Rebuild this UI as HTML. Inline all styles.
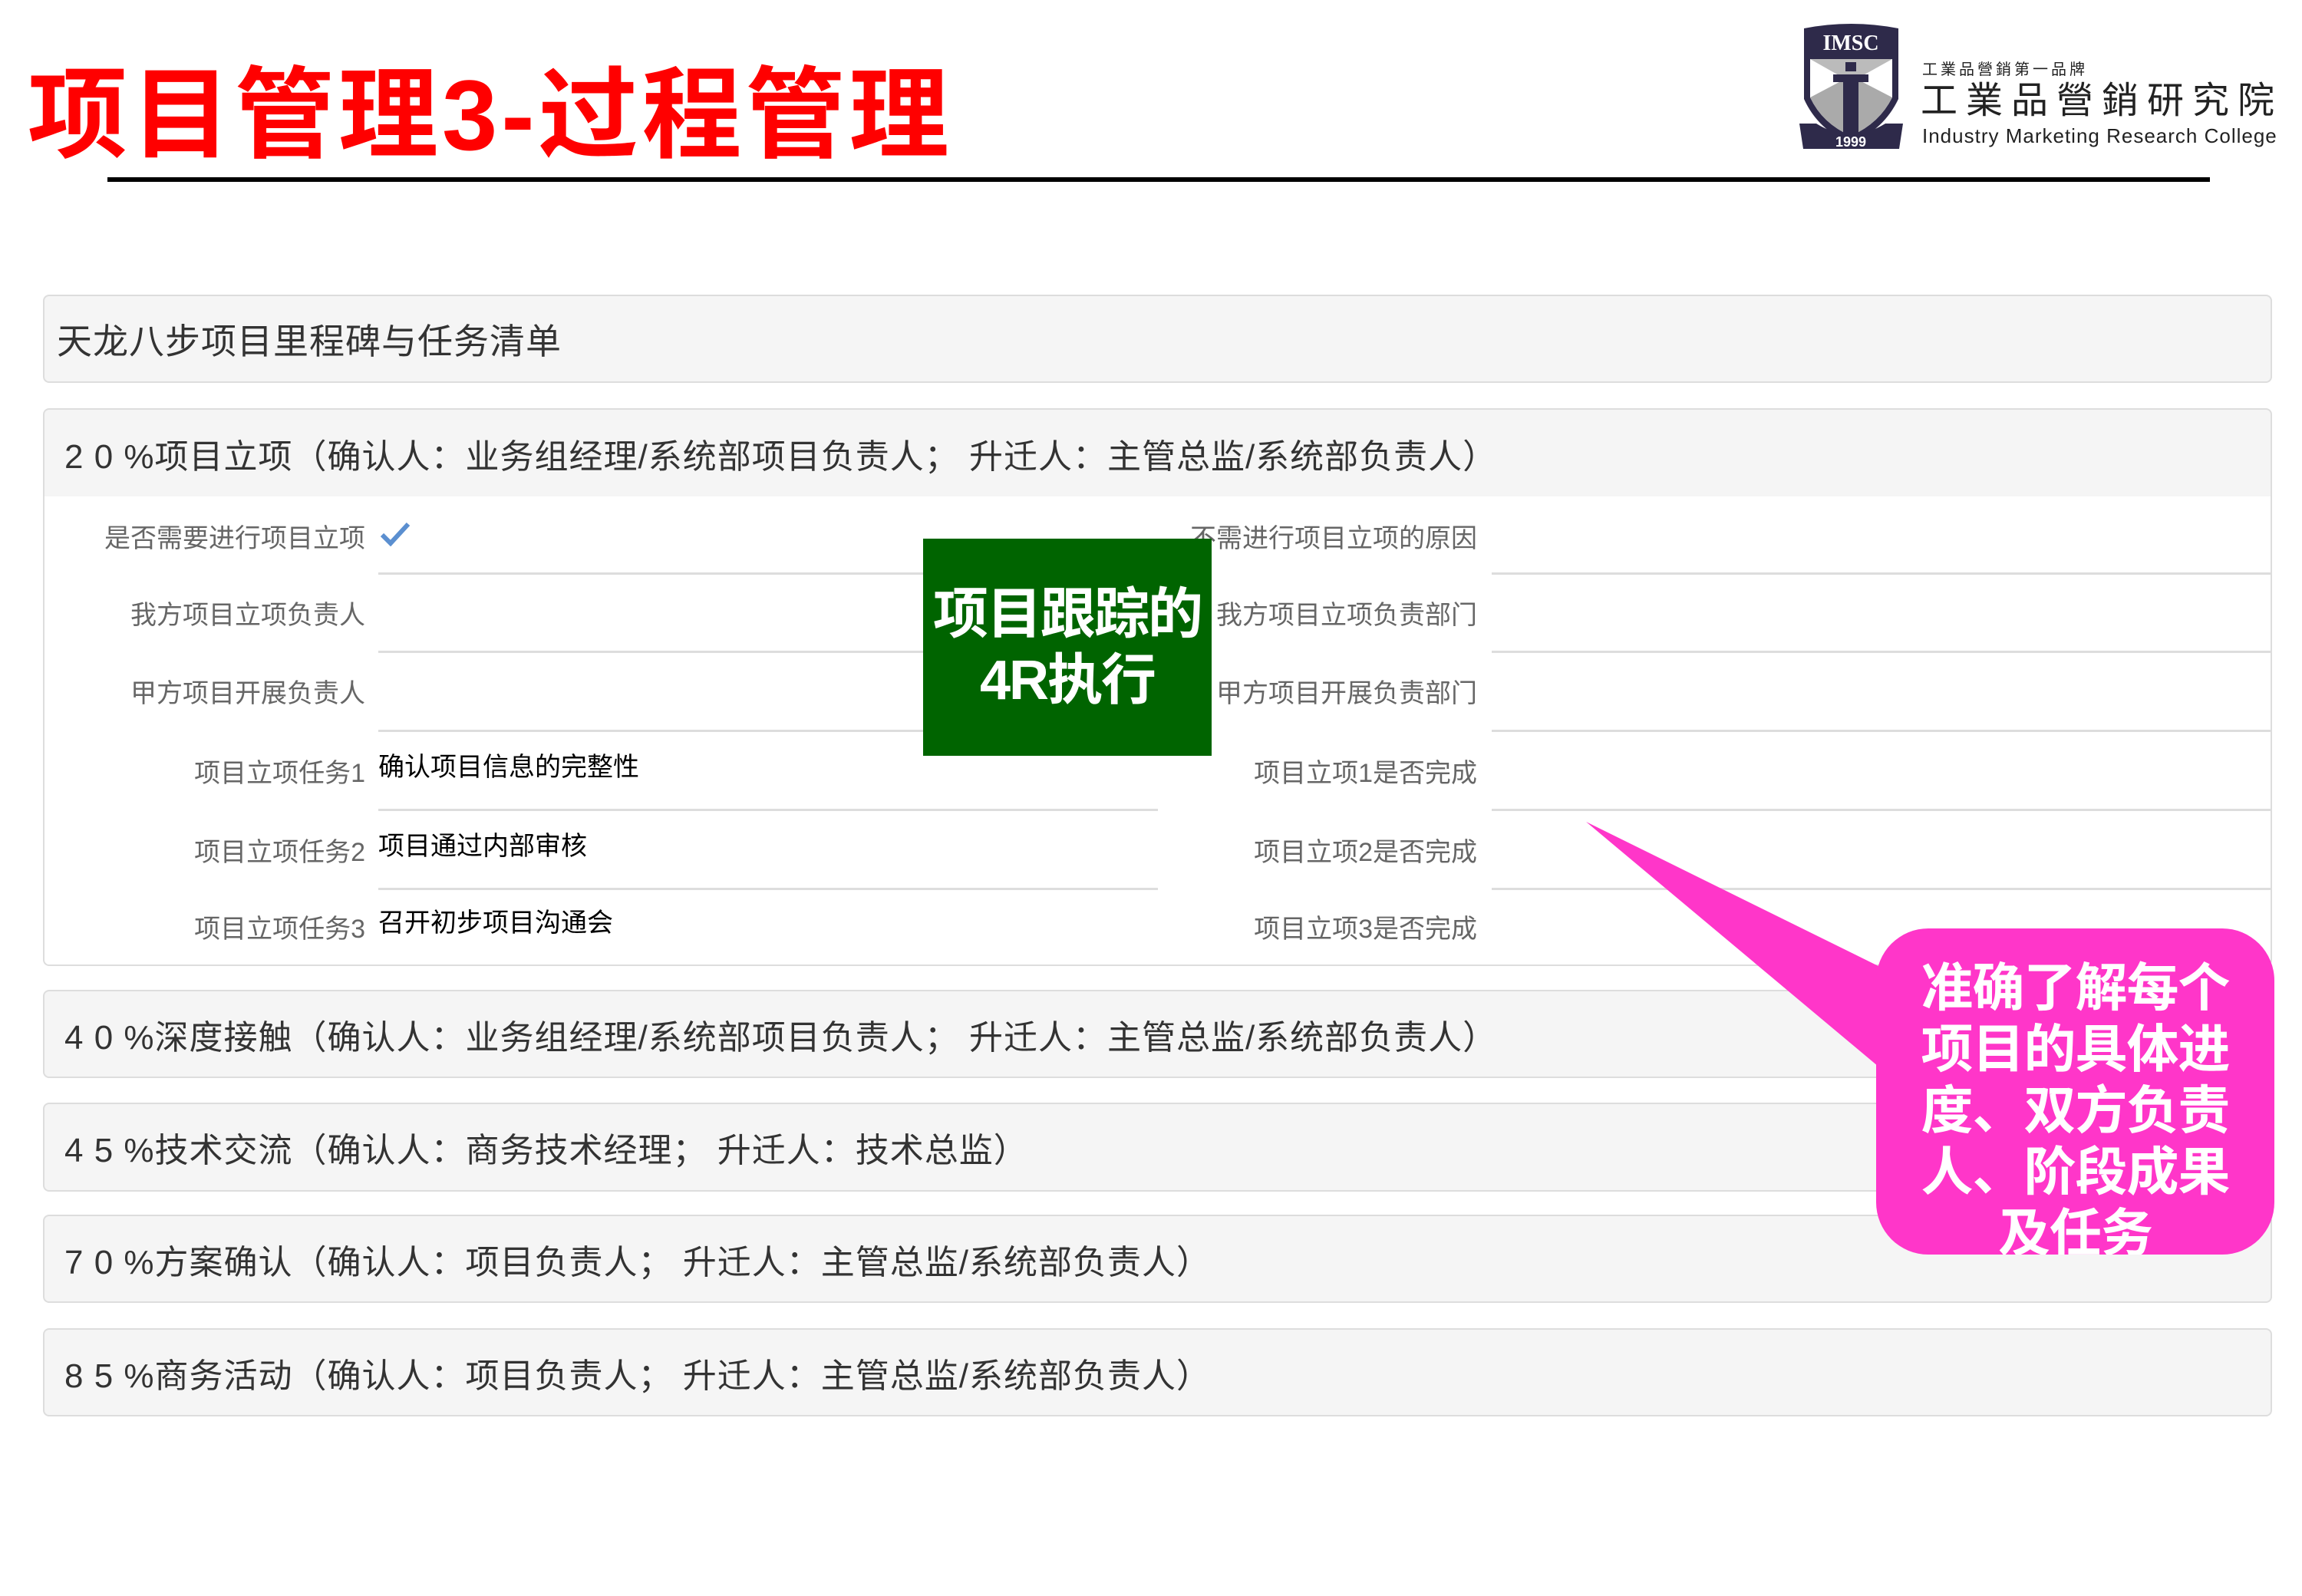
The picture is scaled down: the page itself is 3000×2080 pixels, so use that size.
<!DOCTYPE html>
<html><head><meta charset="utf-8">
<style>
*{margin:0;padding:0;box-sizing:border-box}
body{width:3000px;height:2080px;background:#fff;position:relative;overflow:hidden;font-family:"Liberation Sans","Noto Sans CJK SC",sans-serif}
.a{position:absolute}
.title{left:36px;top:70px;font-size:130px;font-weight:bold;color:#f00;line-height:160px;white-space:nowrap;letter-spacing:5px}
.rule{left:140px;top:231px;width:2740px;height:6px;background:#000}
.panel{left:56px;width:2905px;background:#f5f5f5;border:2px solid #ddd;border-radius:8px}
.ph{font-size:44px;color:#333;white-space:nowrap;display:flex;align-items:center;height:100%;padding-left:26px;letter-spacing:1px}
.body2{left:56px;top:647px;width:2905px;height:612px;background:#fff;border:2px solid #ddd;border-top:none;border-radius:0 0 8px 8px}
.lbl{font-size:34px;color:#666;white-space:nowrap;text-align:right;width:440px}
.val{font-size:34px;color:#000;white-space:nowrap}
.ln{height:3px;background:#ddd}
</style></head><body>
<div class="a title">项目管理3-过程管理</div>
<div class="a rule"></div>

<svg class="a" style="left:2345px;top:29px" width="135" height="170" viewBox="0 0 135 170">
<path d="M6 8 Q67 -4 129 8 L129 100 Q110 140 67 158 Q24 140 6 100 Z" fill="#2e2a4a"/>
<path d="M14 48 L121 48 L121 98 Q104 132 67 148 Q30 132 14 98 Z" fill="#fff"/>
<path d="M14 48 L67 78 L121 48 Z" fill="#bbb"/>
<path d="M14 98 L67 70 L121 98 Q104 132 67 148 Q30 132 14 98Z" fill="#aaa"/>
<rect x="60" y="52" width="14" height="12" fill="#2e2a4a"/>
<rect x="44" y="68" width="46" height="10" fill="#2e2a4a"/>
<rect x="57" y="78" width="20" height="72" fill="#2e2a4a"/>
<text x="67" y="36" font-family="Liberation Serif,serif" font-weight="bold" font-size="28" fill="#fff" text-anchor="middle">IMSC</text>
<path d="M0 132 L22 132 Q67 160 112 132 L135 132 L130 165 L5 165 Z" fill="#2e2a4a"/>
<text x="67" y="162" font-family="Liberation Sans,sans-serif" font-weight="bold" font-size="18" fill="#fff" text-anchor="middle">1999</text>
</svg>
<div class="a" style="left:2505px;top:74px;font-size:20px;color:#222;letter-spacing:4px;white-space:nowrap">工業品營銷第一品牌</div>
<div class="a" style="left:2503px;top:102px;font-size:48px;color:#222;letter-spacing:11px;white-space:nowrap;line-height:60px">工業品營銷研究院</div>
<div class="a" style="left:2505px;top:162px;font-size:26px;color:#222;white-space:nowrap;letter-spacing:1px">Industry Marketing Research College</div>

<div class="a panel" style="top:384px;height:115px"><div class="ph" style="padding-left:16px;font-size:46px">天龙八步项目里程碑与任务清单</div></div>

<div class="a panel" style="top:532px;height:117px;border-radius:8px 8px 0 0"><div class="ph">2 0 %项目立项（确认人：业务组经理/系统部项目负责人； 升迁人：主管总监/系统部负责人）</div></div>
<div class="a body2"></div>

<div class="a lbl" style="left:36px;top:674px">是否需要进行项目立项</div>
<svg class="a" style="left:495px;top:680px" width="40" height="32" viewBox="0 0 40 32"><path d="M3 17 L14 28 L37 3" stroke="#5b8fd0" stroke-width="6" fill="none"/></svg>
<div class="a lbl" style="left:1485px;top:674px">不需进行项目立项的原因</div>

<div class="a lbl" style="left:36px;top:774px">我方项目立项负责人</div>
<div class="a lbl" style="left:1485px;top:774px">我方项目立项负责部门</div>
<div class="a lbl" style="left:36px;top:876px">甲方项目开展负责人</div>
<div class="a lbl" style="left:1485px;top:876px">甲方项目开展负责部门</div>
<div class="a lbl" style="left:36px;top:980px">项目立项任务1</div>
<div class="a val" style="left:493px;top:972px">确认项目信息的完整性</div>
<div class="a lbl" style="left:1485px;top:980px">项目立项1是否完成</div>
<div class="a lbl" style="left:36px;top:1083px">项目立项任务2</div>
<div class="a val" style="left:493px;top:1075px">项目通过内部审核</div>
<div class="a lbl" style="left:1485px;top:1083px">项目立项2是否完成</div>
<div class="a lbl" style="left:36px;top:1183px">项目立项任务3</div>
<div class="a val" style="left:493px;top:1175px">召开初步项目沟通会</div>
<div class="a lbl" style="left:1485px;top:1183px">项目立项3是否完成</div>

<div class="a ln" style="left:493px;top:746px;width:1016px"></div>
<div class="a ln" style="left:493px;top:848px;width:1016px"></div>
<div class="a ln" style="left:493px;top:951px;width:1016px"></div>
<div class="a ln" style="left:493px;top:1054px;width:1016px"></div>
<div class="a ln" style="left:493px;top:1157px;width:1016px"></div>
<div class="a ln" style="left:1944px;top:746px;width:1017px"></div>
<div class="a ln" style="left:1944px;top:848px;width:1017px"></div>
<div class="a ln" style="left:1944px;top:951px;width:1017px"></div>
<div class="a ln" style="left:1944px;top:1054px;width:1017px"></div>
<div class="a ln" style="left:1944px;top:1157px;width:1017px"></div>

<div class="a" style="left:1203px;top:702px;width:376px;height:283px;background:#006400;color:#fff;font-weight:bold;font-size:72px;line-height:86px;text-align:center;padding-top:56px;white-space:nowrap;letter-spacing:-2px">项目跟踪的<br>4R执行</div>

<div class="a panel" style="top:1290px;height:115px"><div class="ph">4 0 %深度接触（确认人：业务组经理/系统部项目负责人； 升迁人：主管总监/系统部负责人）</div></div>
<div class="a panel" style="top:1437px;height:116px"><div class="ph">4 5 %技术交流（确认人：商务技术经理； 升迁人：技术总监）</div></div>
<div class="a panel" style="top:1583px;height:115px"><div class="ph">7 0 %方案确认（确认人：项目负责人； 升迁人：主管总监/系统部负责人）</div></div>
<div class="a panel" style="top:1731px;height:115px"><div class="ph">8 5 %商务活动（确认人：项目负责人； 升迁人：主管总监/系统部负责人）</div></div>

<svg class="a" style="left:0;top:0" width="3000" height="2080"><polygon points="2067,1071 2460,1265 2460,1400" fill="#ff36c9"/></svg>
<div class="a" style="left:2445px;top:1210px;width:519px;height:425px;background:#ff36c9;border-radius:68px;overflow:hidden;color:#fff;font-weight:bold;font-size:68px;line-height:80px;text-align:center;padding-top:38px;letter-spacing:-1px">准确了解每个<br>项目的具体进<br>度、双方负责<br>人、阶段成果<br>及任务</div>
</body></html>
